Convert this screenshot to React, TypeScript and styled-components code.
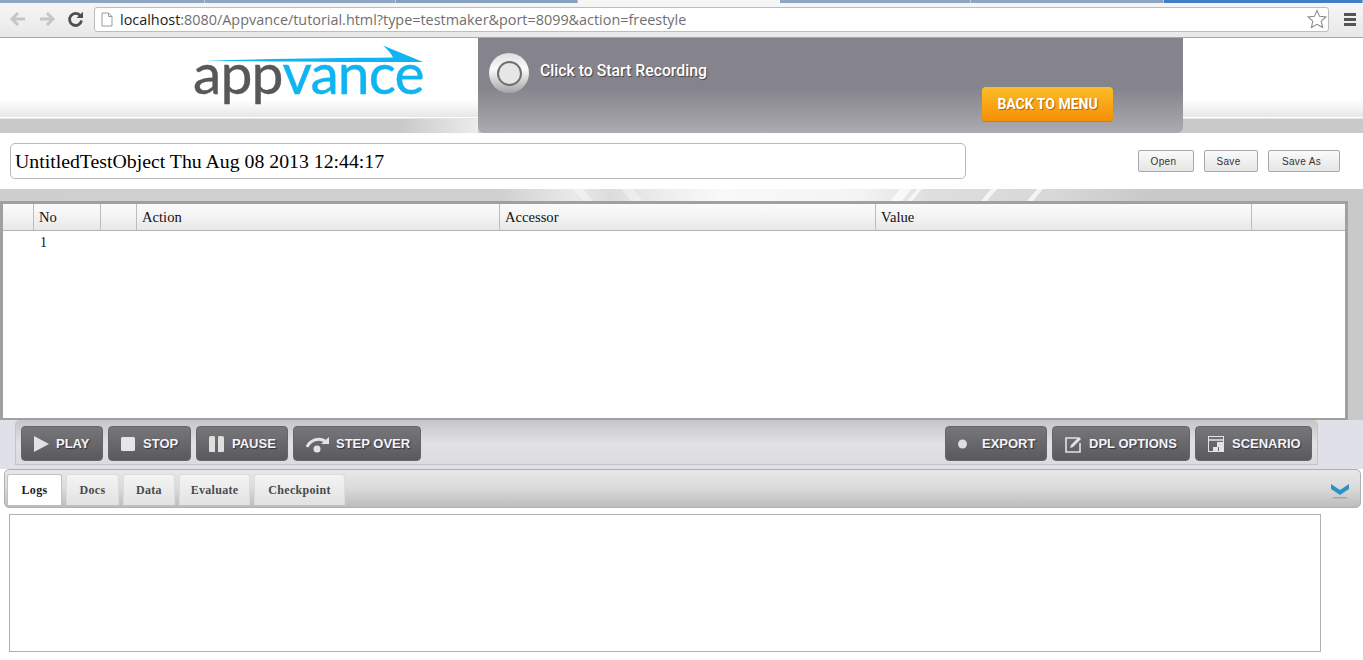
import React from "react";
import styled, { createGlobalStyle } from "styled-components";

const Global = createGlobalStyle`
  html, body { margin: 0; padding: 0; background: #fff; overflow: hidden; }
  * { box-sizing: border-box; }
`;
const Page = styled.div`
  width: 1363px; height: 660px; overflow: hidden; display: flex; flex-direction: column;
  background: #fff; font-family: "Liberation Serif", serif;
`;
const Chrome = styled.div`
  height: 38px; flex: none; display: flex; flex-direction: column;
  background: linear-gradient(#f7f7f7, #e8e8e8); border-bottom: 1px solid #a9a9a9;
`;
const TabStrip = styled.div`display: flex; height: 3px; flex: none;`;
const StripTab = styled.div<{ $w: number; $c: string }>`
  width: ${p => p.$w}px; flex: none; background: ${p => p.$c}; border-right: 1px solid rgba(255,255,255,.4);
`;
const ChromeRow = styled.div`display: flex; align-items: center; flex: 1; padding: 0 0 2px 9px;`;
const NavIcon = styled.svg<{ $gap: number; $flip?: boolean }>`
  flex: none; display: block; margin-right: ${p => p.$gap}px; ${p => (p.$flip ? "transform: scaleX(-1);" : "")}
`;
const Omnibox = styled.div`
  width: 1235px; height: 25px; background: #fff; border: 1px solid #bdbdbd; border-radius: 3px;
  display: flex; align-items: center; padding: 0 1px 0 6px; font: 14.4px "Open Sans", "Liberation Sans", sans-serif; color: #6f6f6f;
`;
const PageGlyph = styled.svg`flex: none;`;
const Host = styled.span`color: #222;`;
const Url = styled.span`flex: 1; margin-left: 7px; white-space: nowrap;`;
const Menu = styled.div`margin-left: 15px; width: 12px; display: flex; flex-direction: column; gap: 2px;`;
const MenuBar = styled.i`display: block; height: 3px; background: #555;`;

const Header = styled.div`
  height: 95px; flex: none; display: flex;
  background: linear-gradient(#fff 0, #fff 62px, #e8e8e8 78px, #e6e6e6 79px, #fff 79px, #fff 80px, #c9c9c9 81px, #c9c9c9 95px);
`;
const LogoArea = styled.div`
  width: 478px; flex: none; padding: 6px 0 0 193px; position: relative; display: flex; align-items: flex-start;
  background: linear-gradient(90deg, transparent 0, transparent 400px, #ececec 478px) bottom / 100% 14px no-repeat;
`;
const LogoWord = styled.span<{ $c: string }>`
  font: 400 57px/1 Lato, sans-serif; color: ${p => p.$c}; letter-spacing: -0.9px;
  -webkit-text-stroke: .4px ${p => p.$c};
`;
const LogoArrow = styled.svg`position: absolute; left: 205px; top: 7px;`;
const RecordPanel = styled.div`
  width: 705px; flex: none; display: flex; position: relative; border-radius: 0 0 6px 6px;
  background: linear-gradient(#85838c 0, #85838c 52%, #acabb0 100%); padding: 15px 0 0 11px;
`;
const RecordIcon = styled.div`
  width: 40px; height: 40px; border-radius: 50%; flex: none; display: flex; align-items: center; justify-content: center;
  background: linear-gradient(#dedede, #fbfbfb 40%, #a4a4a4);
`;
const RecordInner = styled.div`
  width: 25px; height: 25px; border-radius: 50%; background: #e6e6e6; border: 2px solid #6f6e74;
`;
const RecordText = styled.div`
  margin: 8px 0 0 11px; color: #fff; font: 500 15.8px Roboto, sans-serif; text-shadow: 1px 1px 1px rgba(0,0,0,.5);
`;
const BackButton = styled.div`
  position: absolute; left: 504px; top: 49px; width: 131px; height: 35px; border-radius: 4px;
  background: linear-gradient(#fcbd2a, #f68f04); border-bottom: 1px solid #d97a0a; color: #fff;
  display: flex; align-items: center; justify-content: center;
  font: 700 14px Roboto, sans-serif; text-shadow: 1px 1px 1px rgba(120,60,0,.6);
`;
const TitleRow = styled.div`
  height: 56px; flex: none; display: flex; align-items: flex-start; padding: 10px 23px 0 10px; background: #fff;
`;
const TitleBox = styled.div`
  width: 956px; height: 36px; border: 1px solid #b9b9b9; border-radius: 5px; padding: 0 4px; color: #000;
  font-size: 19.8px; line-height: 34px; white-space: nowrap;
`;
const FileButtons = styled.div`display: flex; margin: 7px 0 0 172px; gap: 10px;`;
const FileButton = styled.div<{ $w: number }>`
  width: ${p => p.$w}px; height: 22px; border: 1px solid #a8a8a8; border-radius: 2px; color: #333; padding-right: 5px;
  background: linear-gradient(#fafafa, #e6e6e6); display: flex; align-items: center; justify-content: center;
  font: 10px "Liberation Sans", sans-serif; letter-spacing: .35px;
`;
const Work = styled.div`
  flex: none; height: 231px; display: flex; flex-direction: column;
  background: linear-gradient(90deg, #cfcfcf 0, #d0d0d0 500px, #eaeaea 575px, #dcdcdc 610px, #ececec 660px, #f9f9f9 720px, #f4f4f4 860px, #dedede 930px, #d8d8d8 1050px, #c9c9c9 1150px);
`;
const Band = styled.div`height: 12px; flex: none; position: relative; overflow: hidden;`;
const Streak = styled.i<{ $x: number; $w: number; $lean: number }>`
  position: absolute; top: 0; left: ${p => p.$x}px; width: ${p => p.$w}px; height: 12px;
  background: rgba(255,255,255,${p => (p.$lean > 0 ? 0.35 : 0.7)}); transform: skewX(${p => p.$lean}deg);
`;
const TableWrap = styled.div`
  width: 1348px; height: 219px; flex: none; border: 3px solid #a0a0a0; border-bottom-width: 2px; background: #fff;
`;
const HeadRow = styled.div`
  height: 27px; display: grid; grid-template-columns: 31px 67px 36px 363px 376px 376px 1fr;
  background: linear-gradient(#fbfbfb, #f4f4f4 45%, #e8e8e8); border-bottom: 1px solid #b4b4b4;
`;
const HeadCell = styled.div`
  border-right: 1px solid #bdbdbd; padding-left: 5px; font-size: 14.6px; line-height: 26px; color: #111;
  &:last-child { border-right: 0; }
`;
const DataRow = styled.div`padding: 4px 0 0 37px; font-size: 14px; line-height: 16px; color: #111;`;
const Lower = styled.div`flex: none; height: 49px; background: #e0e0e8; padding-left: 15px;`;
const Toolbar = styled.div`
  width: 1303px; height: 45px; display: flex; justify-content: space-between; padding: 6px 5px 0 5px;
  border: 1px solid #c4c4c4; border-top: 0; border-radius: 5px 5px 0 0;
  background: linear-gradient(#c6c6c9, #e2e2e4 55%, #dcdcde);
`;
const ButtonGroup = styled.div`display: flex; gap: 5px;`;
const ToolButton = styled.div<{ $w: number; $gap: number }>`
  width: ${p => p.$w}px; height: 35px; border-radius: 4px; background: linear-gradient(#77777b, #5a5a5c);
  border: 1px solid #66666a; display: flex; align-items: center; padding-left: 12px; gap: ${p => p.$gap}px;
  color: #f3f3ff; font: 700 13px "Liberation Sans", Arial, sans-serif; white-space: nowrap;
  text-shadow: 1px 1px 1px #333;
`;
const ToolIcon = styled.svg`flex: none; display: block;`;
const TabsPanel = styled.div`flex: 1; background: #fff; padding-left: 4px; min-height: 0;`;
const TabBar = styled.div`
  width: 1357px; height: 39px; border: 1px solid #b0b0b0; border-radius: 5px; position: relative;
  background: linear-gradient(#e7e7e7, #dcdcdc 45%, #bdbdbd); display: flex; gap: 4px; padding: 4px 0 0 2px;
`;
const Tab = styled.div<{ $w: number; $active?: boolean }>`
  width: ${p => p.$w}px; height: 31px; border-radius: 3px 3px 0 0; text-align: center;
  border: 1px solid ${p => (p.$active ? "#c2c2c2" : "#dcdcdc")}; border-bottom: 0;
  background: ${p => (p.$active ? "#fff" : "linear-gradient(#f4f4f4, #e2e2e2)")};
  color: ${p => (p.$active ? "#1b1b1b" : "#4a4a4a")}; font-weight: 700; font-size: 12px; line-height: 30px; letter-spacing: .3px;
`;
const Collapse = styled.svg`position: absolute; right: 11px; top: 12px;`;
const LogBox = styled.div`
  width: 1312px; height: 138px; margin: 6px 0 0 5px; border: 1px solid #b0b0b0; background: #fff;
`;

const Arrow = ({ flip }: { flip?: boolean }) => (
  <NavIcon $gap={11} $flip={flip} width="18" height="16" viewBox="0 0 18 16">
    <path d="M9 2 3 8l6 6M3 8h13" fill="none" stroke="#c6c6c6" strokeWidth="3" />
  </NavIcon>
);

const tools = [
  { t: "PLAY", w: 82, g: 6, i: <path d="M0 1 15 9 0 17Z" fill="#e2e2e2" /> },
  { t: "STOP", w: 83, g: 6, i: <rect x="0" y="2" width="14" height="14" rx="1.5" fill="#e6e6e6" /> },
  { t: "PAUSE", w: 92, g: 7, i: <path d="M0 2.5Q0 1 2 1h3q1 0 1 1.500V17H1q-1 0-1-1ZM9 2.500Q9 1 10 1h3q2 0 2 1.500V16q0 1-1 1H9Z" fill="#dedede" /> },
];
const tools2 = [
  { t: "EXPORT", w: 102, g: 6, i: <circle cx="4.500" cy="9" r="4.500" fill="#dedede" /> },
  { t: "DPL OPTIONS", w: 138, g: 6, i: <g fill="none" stroke="#e4e4e4" strokeWidth="1.600"><path d="M13 3H1v14h14V8" /><path d="M5 13l1-3 8-8 2 2-8 8Z" fill="#e4e4e4" stroke="none" /></g> },
  { t: "SCENARIO", w: 117, g: 6, i: <g fill="none" stroke="#e4e4e4"><rect x="0.500" y="1.500" width="15" height="15" /><path d="M0 5h16" strokeWidth="1.500" /><path d="M9 7h6v5H9ZM5 12h5v5H5ZM11 12h5v5h-5Z" fill="#e4e4e4" stroke="none" /></g> },
];

export default function App() {
  return (
    <Page>
      <Global />
      <Chrome>
        <TabStrip>
          <StripTab $w={205} $c="#8ea6c2" />
          <StripTab $w={191} $c="#8ea6c2" />
          <StripTab $w={182} $c="#86a0bf" />
          <StripTab $w={202} $c="#f5f5f5" />
          <StripTab $w={191} $c="#8ea6c2" />
          <StripTab $w={193} $c="#8ea6c2" />
          <StripTab $w={199} $c="#3f7fc8" />
        </TabStrip>
        <ChromeRow>
          <Arrow />
          <Arrow flip />
          <NavIcon $gap={10} width="17" height="17" viewBox="0 0 17 17">
            <path d="M13.500 5A6 6 0 1 0 14.500 9.500" fill="none" stroke="#4f4f4f" strokeWidth="2.800" />
            <path d="M9.500 7H16V.8Z" fill="#4f4f4f" />
          </NavIcon>
          <Omnibox>
            <PageGlyph width="12" height="15" viewBox="0 0 12 15">
              <path d="M1 1h6.500L11 4.500V14H1Z" fill="#fff" stroke="#9a9a9a" />
              <path d="M7.500 1v3.500H11" fill="none" stroke="#9a9a9a" />
            </PageGlyph>
            <Url><Host>localhost</Host>:8080/Appvance/tutorial.html?type=testmaker&amp;port=8099&amp;action=freestyle</Url>
            <PageGlyph width="20" height="20" viewBox="0 0 19 19">
              <path d="M9.500 1.500 12 7l6 .6-4.500 4 1.300 6-5.300-3.100-5.300 3.100 1.300-6L1 7.600 7 7Z" fill="#fff" stroke="#8a8a8a" />
            </PageGlyph>
          </Omnibox>
          <Menu><MenuBar /><MenuBar /><MenuBar /></Menu>
        </ChromeRow>
      </Chrome>
      <Header>
        <LogoArea>
          <LogoWord $c="#58585a">app</LogoWord>
          <LogoWord $c="#0fb4f2">vance</LogoWord>
          <LogoArrow width="220" height="18" viewBox="0 0 220 18">
            <path d="M0 15.500C60 14 130 13 188 12.500 186 8 182 4 178 .5L218 17C150 17 70 16.800 0 15.500Z" fill="#0fb4f2" />
          </LogoArrow>
        </LogoArea>
        <RecordPanel>
          <RecordIcon><RecordInner /></RecordIcon>
          <RecordText>Click to Start Recording</RecordText>
          <BackButton>BACK TO MENU</BackButton>
        </RecordPanel>
      </Header>
      <TitleRow>
        <TitleBox>UntitledTestObject Thu Aug 08 2013 12:44:17</TitleBox>
        <FileButtons>
          <FileButton $w={56}>Open</FileButton>
          <FileButton $w={54}>Save</FileButton>
          <FileButton $w={72}>Save As</FileButton>
        </FileButtons>
      </TitleRow>
      <Work>
        <Band>
          <Streak $x={578} $w={10} $lean={40} />
          <Streak $x={626} $w={12} $lean={40} />
          <Streak $x={895} $w={12} $lean={-40} />
          <Streak $x={912} $w={5} $lean={-40} />
          <Streak $x={986} $w={6} $lean={-40} />
          <Streak $x={1032} $w={6} $lean={-40} />
        </Band>
        <TableWrap>
          <HeadRow>
            <HeadCell />
            <HeadCell>No</HeadCell>
            <HeadCell />
            <HeadCell>Action</HeadCell>
            <HeadCell>Accessor</HeadCell>
            <HeadCell>Value</HeadCell>
            <HeadCell />
          </HeadRow>
          <DataRow>1</DataRow>
        </TableWrap>
      </Work>
      <Lower>
        <Toolbar>
          <ButtonGroup>
            {tools.map(b => (
              <ToolButton key={b.t} $w={b.w} $gap={b.g}>
                <ToolIcon width="16" height="18" viewBox="0 0 16 18">{b.i}</ToolIcon>{b.t}
              </ToolButton>
            ))}
            <ToolButton $w={128} $gap={5}>
              <ToolIcon width="25" height="18" viewBox="0 0 25 18">
                <path d="M1 12C4 5 13 2 19 6" fill="none" stroke="#e4e4e4" strokeWidth="3" />
                <path d="M23 2v7h-8Z" fill="#e4e4e4" />
                <circle cx="11" cy="14" r="3.500" fill="#e4e4e4" />
              </ToolIcon>
              STEP OVER
            </ToolButton>
          </ButtonGroup>
          <ButtonGroup>
            {tools2.map(b => (
              <ToolButton key={b.t} $w={b.w} $gap={b.g}>
                <ToolIcon width="18" height="18" viewBox="0 0 18 18">{b.i}</ToolIcon>{b.t}
              </ToolButton>
            ))}
          </ButtonGroup>
        </Toolbar>
      </Lower>
      <TabsPanel>
        <TabBar>
          <Tab $w={55} $active>Logs</Tab>
          <Tab $w={53}>Docs</Tab>
          <Tab $w={52}>Data</Tab>
          <Tab $w={71}>Evaluate</Tab>
          <Tab $w={91}>Checkpoint</Tab>
          <Collapse width="18" height="17" viewBox="0 0 18 17">
            <path d="M0 2 9 8 18 2V7L9 13 0 7Z" fill="#2d93c6" />
            <rect x="2" y="15" width="14" height="1.500" fill="#a5a5a5" />
          </Collapse>
        </TabBar>
        <LogBox />
      </TabsPanel>
    </Page>
  );
}
